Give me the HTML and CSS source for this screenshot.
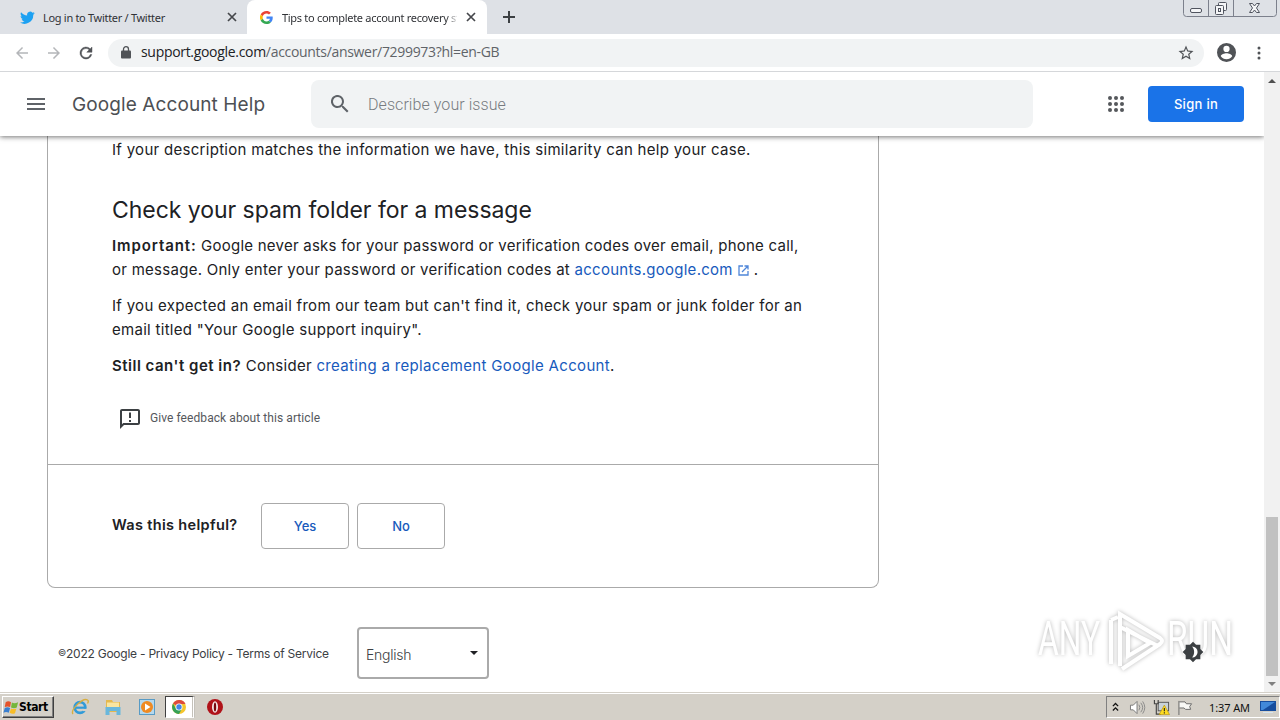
FILE: index.html
```html
<!DOCTYPE html>
<html lang="en">
<head>
<meta charset="utf-8">
<title>Tips to complete account recovery steps</title>
<link rel="stylesheet" href="styles.css">
</head>
<body>
<div class="tabs">
  <div class="tab tab-idle">
    <svg class="fav" viewBox="0 0 24 24"><path fill="#1da1f2" d="M23.6 4.9c-.9.4-1.8.6-2.8.8 1-.6 1.8-1.6 2.2-2.7-1 .6-2 1-3.1 1.2a4.9 4.9 0 0 0-8.400 4.500C7.700 8.500 4.100 6.600 1.700 3.600c-1.300 2.200-.700 5.100 1.500 6.600-.8 0-1.600-.2-2.200-.6 0 2.300 1.600 4.400 3.900 4.900-.7.200-1.500.2-2.200.1.600 2 2.400 3.400 4.600 3.400A9.900 9.900 0 0 1 0 20.100 14 14 0 0 0 21.200 7.500c.9-.7 1.800-1.600 2.400-2.600z"/></svg>
    <span class="tab-name tn1">Log in to Twitter / Twitter</span>
    <svg class="x" viewBox="0 0 10 10"><path d="M1 1l8 8M9 1L1 9"/></svg>
  </div>
  <div class="tab tab-on">
    <svg class="fav g" viewBox="0 0 48 48"><path fill="#EA4335" d="M24 9.500c3.500 0 6.700 1.200 9.200 3.600l6.900-6.900C35.900 2.400 30.500 0 24 0 14.600 0 6.500 5.400 2.600 13.200l8 6.200C12.400 13.700 17.700 9.500 24 9.500z"/><path fill="#4285F4" d="M47 24.600c0-1.600-.2-3.100-.4-4.600H24v9h12.900c-.6 3-2.200 5.500-4.700 7.200l7.700 6C44.400 38 47 31.800 47 24.600z"/><path fill="#FBBC05" d="M10.500 28.600a14.500 14.500 0 0 1 0-9.200l-8-6.200a24 24 0 0 0 0 21.600z"/><path fill="#34A853" d="M24 48c6.500 0 11.900-2.100 15.900-5.800l-7.700-6c-2.200 1.500-4.900 2.300-8.200 2.300-6.300 0-11.600-4.200-13.500-9.900l-8 6.200C6.500 42.600 14.600 48 24 48z"/></svg>
    <span class="tab-name tn2">Tips to complete account recovery steps</span>
    <svg class="x" viewBox="0 0 10 10"><path d="M1 1l8 8M9 1L1 9"/></svg>
  </div>
  <svg class="plus" viewBox="0 0 12 12"><path d="M6 0v12M0 6h12"/></svg>
  <div class="wincontrols">
    <svg viewBox="0 0 94 18"><path d="M.5 0v13.500q0 3 3 3h87q3 0 3-3V0M25.500 0v16M50.500 0v16" fill="none" stroke="#7c808c"/><g fill="#f4f5f7" stroke="#50545f"><rect x="7.500" y="8.500" width="11" height="4" rx="1.500"/><rect x="35.500" y="2.500" width="8" height="8" rx="1"/><rect x="32.500" y="5.500" width="8" height="9" rx="1"/><rect x="35.500" y="8.500" width="2" height="3"/><path d="M66.500 3.500h3l2 2.500 2-2.500h3L73.500 8l3 4.500h-3l-2-2.500-2 2.500h-3l3-4.500z"/></g></svg>
  </div>
</div>
<div class="toolbar">
  <svg class="nav" viewBox="0 0 24 24" fill="#b4b6b9"><path d="M20 11H7.800l5.600-5.600L12 4l-8 8 8 8 1.400-1.400L7.800 13H20z"/></svg>
  <svg class="nav" viewBox="0 0 24 24" fill="#b4b6b9"><path d="M4 13h12.200l-5.600 5.600L12 20l8-8-8-8-1.400 1.400 5.600 5.600H4z"/></svg>
  <svg class="nav" viewBox="0 0 24 24" fill="#505357" stroke="#505357" stroke-width=".6"><path d="M17.650 6.350A8 8 0 1 0 19.730 14h-2.080A6 6 0 1 1 12 6c1.660 0 3.140.69 4.220 1.780L13 11h7V4z"/></svg>
  <div class="omnibox">
    <svg class="lock" viewBox="0 0 10 13"><rect y="4.500" width="10" height="8" rx="1" fill="#505357"/><path d="M2.500 5V3.200a2.500 2.500 0 0 1 5 0V5" fill="none" stroke="#505357" stroke-width="1.300"/></svg>
    <span class="url">support.google.com<span>/accounts/answer/7299973?hl=en-GB</span></span>
    <svg class="star" viewBox="0 0 24 24" fill="#505357"><path d="M22 9.240l-7.190-.62L12 2 9.190 8.630 2 9.240l5.460 4.730L5.820 21 12 17.270 18.180 21l-1.630-7.030zM12 15.400l-3.760 2.270 1-4.280-3.320-2.880 4.380-.38L12 6.100l1.710 4.040 4.380.38-3.320 2.880 1 4.280z"/></svg>
  </div>
  <svg class="avatar" viewBox="2 2 20 20" fill="#505357"><path d="M12 2a10 10 0 1 0 0 20 10 10 0 0 0 0-20zm0 3a3.300 3.300 0 1 1 0 6.600A3.300 3.300 0 0 1 12 5zm0 14.200a7.200 7.200 0 0 1-6-3.220c.03-2 4-3.080 6-3.080s5.970 1.090 6 3.080a7.200 7.200 0 0 1-6 3.220z"/></svg>
  <svg class="kebab" viewBox="0 0 4 14" fill="#505357"><circle cx="2" cy="2" r="1.500"/><circle cx="2" cy="7" r="1.500"/><circle cx="2" cy="12" r="1.500"/></svg>
</div>
<div class="viewport">
  <div class="page">
    <header class="header">
      <svg class="menu" viewBox="0 0 18 12" fill="#5f6368"><path d="M0 0h18v2H0zM0 5h18v2H0zM0 10h18v2H0z"/></svg>
      <div class="product">Google Account Help</div>
      <div class="search">
        <svg viewBox="0 0 18 18" fill="#5f6368"><path d="M12.500 11h-.8l-.3-.3A6.500 6.500 0 1 0 10.700 11.400l.3.300v.8l5 5 1.500-1.500zm-6 0a4.500 4.500 0 1 1 0-9 4.500 4.500 0 0 1 0 9z"/></svg>
        <span>Describe your issue</span>
      </div>
      <svg class="apps" viewBox="0 0 16 16" fill="#55585c"><circle cx="2" cy="2" r="2"/><circle cx="8" cy="2" r="2"/><circle cx="14" cy="2" r="2"/><circle cx="2" cy="8" r="2"/><circle cx="8" cy="8" r="2"/><circle cx="14" cy="8" r="2"/><circle cx="2" cy="14" r="2"/><circle cx="8" cy="14" r="2"/><circle cx="14" cy="14" r="2"/></svg>
      <div class="signin">Sign in</div>
    </header>
    <main class="card">
      <article>
        <p class="l1">If your description matches the information we have, this similarity can help your case.</p>
        <h2>Check your spam folder for a message</h2>
        <p><span class="l2"><b>Important:</b> Google never asks for your password or verification codes over email, phone call,</span><br><span class="l3">or message. Only enter your password or verification codes at <a>accounts.google.com</a></span> <svg class="ext" viewBox="0 0 11 11"><path d="M5 1H1v9h9V6M6.500 1H10v3.500M10 1L4 7"/></svg> .</p>
        <p><span class="l4">If you expected an email from our team but can't find it, check your spam or junk folder for an</span><br><span class="l5">email titled "Your Google support inquiry".</span></p>
        <p class="l6"><b>Still can't get in?</b> Consider <a>creating a replacement Google Account</a>.</p>
        <div class="feedback"><svg viewBox="0 0 20 20" fill="#3c4043"><path d="M18 0H2C.9 0 0 .9 0 2v18l4-4h14c1.100 0 2-.9 2-2V2c0-1.100-.9-2-2-2zm0 14H3.200L2 15.200V2h16zM9 11h2v2H9zM9 3.500h2v5.500H9z"/></svg><span>Give feedback about this article</span></div>
      </article>
      <div class="helpful"><b>Was this helpful?</b><span class="btn">Yes</span><span class="btn">No</span></div>
    </main>
    <footer class="footer">
      <span class="legal"><span class="copy">©</span>2022 Google - Privacy Policy - Terms of Service</span>
      <div class="select"><span>English</span><i></i></div>
    </footer>
    <svg class="watermark" viewBox="0 0 200 70">
      <g class="wm-letters"><text x="2" y="49" textLength="62" lengthAdjust="spacingAndGlyphs">ANY</text><text x="131" y="49" textLength="66" lengthAdjust="spacingAndGlyphs">RUN</text></g>
      <path class="wm-mark" d="M75 14v44M75 14l7-3M84 60V8l40 24q4 3 0 6L86 63M84 21l38 19M92 24v26l22-13z"/>
    </svg>
    <svg class="theme" viewBox="0 0 24 24"><path fill="#3c4043" d="M20 8.700V4h-4.700L12 .7 8.700 4H4v4.700L.7 12 4 15.300V20h4.700l3.300 3.300 3.300-3.300H20v-4.700l3.300-3.300z"/><path fill="#fff" d="M11 6a6 6 0 0 1 0 12c3-3 3-9 0-12z"/></svg>
  </div>
  <div class="scroll"><i class="up"></i><div class="thumb"></div><i class="down"></i></div>
</div>
<div class="taskbar">
  <div class="start"><svg viewBox="0 0 18 16"><path fill="#e5532b" d="M3 2q3-2 6 0L8 7.500q-3-1.500-6 0z"/><path fill="#74b63b" d="M10 2.500q3 1.500 7-.5l-1.500 6q-3 1.500-6.500 0z"/><path fill="#3a7fd0" d="M2 8.500q3-1.500 6 0L6.500 14q-3-2-6 0z"/><path fill="#f8bd28" d="M9 9q3 1.500 6 0l-1.500 5.500q-3 1.500-6-.5z"/></svg>Start</div>
  <svg class="tb ie" viewBox="0 0 18 18"><circle cx="9" cy="9.500" r="5.300" fill="none" stroke="#329bd8" stroke-width="2.800"/><path d="M4 9.700h10.500" stroke="#329bd8" stroke-width="2.200"/><path d="M11.500 10.900h6v2.200h-6z" fill="#d4d0c8"/><path d="M2 16C-1 12 12-1 16.500 2q1.500 1 0 3.500" fill="none" stroke="#d8ae3f" stroke-width="1.400"/></svg>
  <svg class="tb folder" viewBox="0 0 18 18"><path fill="#e5b94f" d="M2 2h6l1 2h7v10H2z"/><path fill="#f9e5a0" d="M3 4.500h12V11H3z"/><path fill="#69b7dc" d="M1.500 9h15v8h-4v-4h-7v4h-4z"/></svg>
  <svg class="tb wmp" viewBox="0 0 18 18"><rect x="1.500" y="1.500" width="15" height="15" fill="#b5d8ed" stroke="#589bc5"/><circle cx="9" cy="9" r="6" fill="#ef8a22"/><path fill="#fff" d="M7 5.500v7L12.500 9z"/></svg>
  <div class="active"><svg viewBox="0 0 16 16"><circle cx="8" cy="8" r="7" fill="#f5c52c"/><path fill="#dd4b3e" d="M8 8L2 4.500A7 7 0 0 1 14.500 5H8z"/><path fill="#35a156" d="M2 4.500A7 7 0 0 0 8 15l3-5.200H5z"/><circle cx="8" cy="8" r="3.500" fill="#fff"/><circle cx="8" cy="8" r="2.700" fill="#4386e8"/></svg></div>
  <svg class="tb opera" viewBox="0 0 18 18"><circle cx="9" cy="9" r="8" fill="#b01219"/><ellipse cx="9" cy="9" rx="3" ry="5.800" fill="#f5e9e9"/><ellipse cx="9" cy="9" rx="1.200" ry="4.600" fill="#77070d"/></svg>
  <div class="tray">
    <svg class="chev" viewBox="0 0 8 10"><path d="M1 4l3-3 3 3M1 9l3-3 3 3" fill="none" stroke="#111" stroke-width="1.500"/></svg>
    <svg class="spk" viewBox="0 0 18 16"><path d="M1.500 5.500h3l4-4v13l-4-4h-3z" fill="#fff" stroke="#777"/><path d="M10.500 5q2 3 0 6M12.500 3q4 5 0 10M14.500 1.500q4.500 6.500 0 13" fill="none" stroke="#888"/></svg>
    <svg class="net" viewBox="0 0 18 18"><rect x="5.500" y="3.500" width="11" height="9" fill="#c9d2d8" stroke="#555"/><path d="M1.500 1v4h4V1M3.500 5v11h5" fill="none" stroke="#444" stroke-width="1.200"/><path d="M12 6.500l5.500 10h-11z" fill="#ffdc20" stroke="#b99309" stroke-width=".7"/><path d="M12 9.500v3.500M12 14v1.300" stroke="#222" stroke-width="1.200"/></svg>
    <svg class="flag" viewBox="0 0 16 16"><path d="M1.500 1v15M2 2h6l1.500 2H15l-2 3 1 3H8.500L7 8.500H2" fill="#f8f8f5" stroke="#666"/></svg>
    <span>1:37 AM</span>
    <svg class="desk" viewBox="0 0 16 14"><path d="M0 1h16v10H0z" fill="#174d9d"/><path d="M1 2h14L3 10H1z" fill="#4289d9"/><path d="M3 12h10v1H3z" fill="#d6e4ef"/></svg>
  </div>
</div>
</body>
</html>
```
FILE: styles.css
```css
* { box-sizing: border-box; }
body { margin: 0; width: 1280px; height: 720px; overflow: hidden; background: #fff; font-family: Inter, "Liberation Sans", sans-serif; color: #202124; display: flex; flex-direction: column; }
svg { display: block; flex: none; }
.tabs { height: 34px; flex: none; background: #dee1e6; display: flex; align-items: center; position: relative; }
.tab { height: 34px; display: flex; align-items: center; font: 11px "Noto Sans", sans-serif; color: #303236; }
.tab-idle { width: 247px; padding-left: 20px; }
.tab-on { width: 240px; padding-left: 13px; background: #fff; border-radius: 8px 8px 0 0; }
.fav { width: 15px; height: 15px; margin-right: 8px; }
.fav.g { width: 13px; height: 13px; margin-right: 9px; }
.tab-name { white-space: nowrap; overflow: hidden; }
.tn1 { width: 184px; letter-spacing: -.3px; }
.tn2 { width: 175px; letter-spacing: -.3px; margin-right: 9px; -webkit-mask-image: linear-gradient(90deg, #000 164px, transparent 177px); mask-image: linear-gradient(90deg, #000 164px, transparent 177px); }
.x { width: 10px; height: 10px; fill: none; stroke: #45474b; stroke-width: 1.7; }
.plus { width: 12px; height: 12px; margin-left: 16px; fill: none; stroke: #3c4043; stroke-width: 2; }
.wincontrols { margin: 0 3px 0 auto; align-self: flex-start; width: 94px; height: 18px; }
.toolbar { height: 38px; flex: none; background: #fff; border-bottom: 1px solid #d5d7da; display: flex; align-items: center; padding-left: 13px; }
.nav { width: 18px; height: 18px; margin-right: 14px; }
.omnibox { width: 1096px; height: 28px; border-radius: 14px; background: #f1f3f4; display: flex; align-items: center; padding: 0 10px 0 13px; margin-left: -1px; }
.lock { width: 10px; height: 13px; }
.url { flex: 1; margin-left: 10px; font: 14px/20px "Open Sans", sans-serif; letter-spacing: -.31px; margin-top: -2px; white-space: nowrap; }
.url span { color: #5f6368; }
.star { width: 18px; height: 18px; margin-right: -1px; }
.avatar { width: 19px; height: 19px; margin-left: 13px; }
.kebab { width: 4px; height: 14px; margin-left: 21px; }
.viewport { height: 620px; flex: none; display: flex; }
.page { width: 1264px; height: 620px; overflow: hidden; position: relative; }
.header { height: 64px; background: #fff; display: flex; align-items: center; padding: 0 20px 0 27px; position: relative; z-index: 1; box-shadow: 0 1px 5px rgba(0,0,0,.55); }
.menu { width: 18px; height: 12px; }
.product { margin-left: 27px; width: 239px; font-size: 19px; letter-spacing: .1px; color: #4d5054; white-space: nowrap; }
.search { width: 722px; height: 48px; border-radius: 8px; background: #f1f3f4; display: flex; align-items: center; padding-left: 20px; color: #777b80; font: 300 16px Roboto, sans-serif; letter-spacing: .07px; }
.search svg { width: 18px; height: 18px; margin-right: 19px; }
.apps { width: 16px; height: 16px; margin-left: 75px; }
.signin { margin-left: auto; width: 96px; height: 36px; border-radius: 4px; background: #1a73e8; color: #fff; font-size: 13px; font-weight: 500; letter-spacing: .3px; display: flex; align-items: center; justify-content: center; }
.card { margin-left: 47px; width: 832px; height: 452px; border: 1px solid #aaa; border-top: 0; border-radius: 0 0 8px 8px; }
article { height: 329px; padding: 2px 0 0 64px; border-bottom: 1px solid #aaa; }
article p { margin: 0 0 12px; font-size: 15px; line-height: 24px; letter-spacing: .29px; white-space: nowrap; }
article h2 { margin: 32px 0 8px; font-size: 23px; line-height: 32px; font-weight: 400; letter-spacing: -.04px; white-space: nowrap; }
article p.l1 { margin: 0; }
b { font-weight: 600; }
.l2 { letter-spacing: .24px; }
.l2 b { letter-spacing: .9px; }
.l3 { letter-spacing: .27px; margin-right: 1px; }
.l6 b { letter-spacing: .5px; }
.l6 a { letter-spacing: .33px; }
a { color: #185abc; }
.ext { display: inline-block; width: 11px; height: 11px; vertical-align: -1px; fill: none; stroke: #4f86d9; stroke-width: 1.3; }
.feedback { margin: 29px 0 0 8px; display: flex; align-items: center; height: 22px; font: 12px Roboto, sans-serif; letter-spacing: .07px; color: #55585c; }
.feedback svg { width: 20px; height: 20px; margin-right: 10px; margin-top: 1px; }
.helpful { height: 122px; padding-left: 64px; display: flex; align-items: center; }
.helpful b { width: 149px; font-size: 14.5px; letter-spacing: .33px; margin-top: -3px; white-space: nowrap; }
.btn { width: 88px; height: 46px; margin-right: 8px; border: 1px solid #aaa; border-radius: 4px; display: flex; align-items: center; justify-content: center; color: #185abc; font-size: 13px; font-weight: 500; }
.footer { display: flex; align-items: center; margin: 39px 0 0 58px; height: 52px; }
.legal { width: 299px; font-size: 12px; letter-spacing: -.24px; color: #3c4043; white-space: nowrap; }
.copy { font-size: 9px; vertical-align: 2px; }
.select { width: 132px; height: 52px; border: 2px solid #aaa; border-radius: 4px; padding: 3px 9px 0 7px; display: flex; align-items: center; justify-content: space-between; font-size: 14px; font-weight: 300; letter-spacing: -.25px; color: #3c4043; }
.select i { border: 4px solid transparent; border-top-color: #202124; border-bottom: 0; margin-top: -3px; }
.watermark { position: absolute; left: 1036px; top: 534px; width: 200px; height: 70px; filter: drop-shadow(0 0 2px rgba(0,0,0,.28)); }
.wm-letters { fill: #fff; font: 48px Roboto, sans-serif; }
.wm-mark { fill: none; stroke: #fff; stroke-width: 4; }
.theme { position: absolute; left: 1182px; top: 569px; width: 22px; height: 22px; }
.scroll { width: 16px; background: #f1f1f1; display: flex; flex-direction: column; align-items: center; }
.up, .down { border: 4px solid transparent; }
.up { border-bottom-color: #505050; border-top: 0; margin-top: 7px; }
.thumb { width: 12px; height: 159px; margin-top: 434px; background: #c1c1c1; }
.down { border-top-color: #808080; border-bottom: 0; margin-top: 6px; }
.taskbar { height: 28px; background: #d4d0c8; border-top: 1px solid #d4d0c8; box-shadow: inset 0 1px #fff; display: flex; align-items: center; padding: 1px 0 0 2px; font-family: "DejaVu Sans", sans-serif; }
.start { width: 52px; height: 22px; border: 1px solid; border-color: #fff #404040 #404040 #fff; box-shadow: inset -1px -1px #808080; display: flex; align-items: center; font: bold 12px "DejaVu Sans Condensed", "DejaVu Sans", sans-serif; color: #000; letter-spacing: -.4px; }
.start svg { width: 16px; height: 15px; }
.tb { width: 18px; height: 18px; }
.ie { margin-left: 17px; } .folder { margin-left: 15px; } .wmp { margin-left: 16px; }
.active { margin-left: 9px; width: 30px; height: 22px; border: 1px solid; border-color: #404040 #fff #fff #404040; background: #fff; border-right: 3px double #c4c1ba; display: flex; align-items: center; padding-left: 5px; }
.active svg { width: 16px; height: 16px; }
.opera { margin-left: 11px; }
.tray { margin-left: auto; width: 174px; height: 22px; border: 1px solid; border-color: #808080 #fff #fff #808080; display: flex; align-items: center; font-size: 11px; color: #111; }
.chev { width: 7px; height: 10px; margin-left: 5px; }
.spk { width: 17px; height: 15px; margin-left: 10px; }
.net { width: 17px; height: 17px; margin-left: 7px; }
.flag { width: 16px; height: 15px; margin-left: 7px; }
.tray span { width: 41px; margin-left: 16px; letter-spacing: -.1px; white-space: nowrap; font-family: "Noto Sans", sans-serif; }
.desk { width: 16px; height: 14px; margin-left: 10px; }
```
